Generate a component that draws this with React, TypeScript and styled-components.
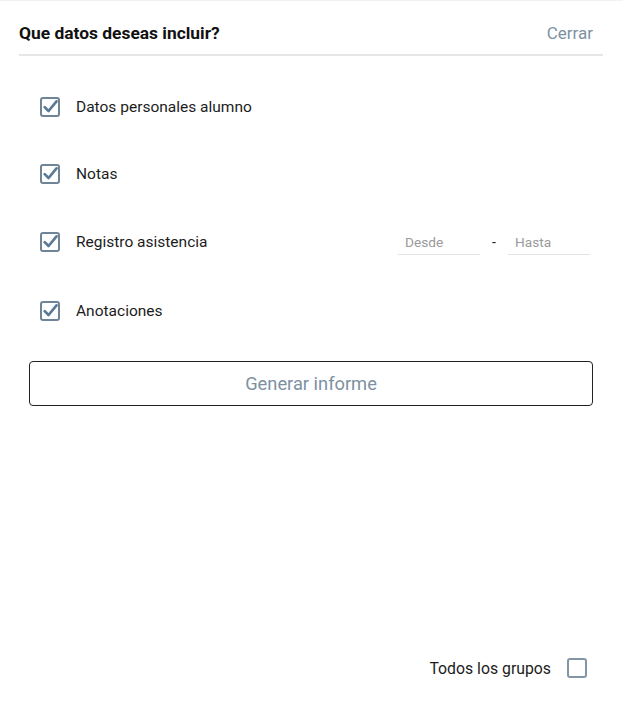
import * as React from 'react'
import styled, { createGlobalStyle } from 'styled-components'

const GlobalStyle = createGlobalStyle`
  html, body {
    margin: 0;
    padding: 0;
    background: #ffffff;
    font-family: Roboto, 'Noto Sans', sans-serif;
  }
`

const Page = styled.div`
  width: 623px;
  height: 704px;
  box-sizing: border-box;
  padding: 0 20px 0 19px;
  display: flex;
  flex-direction: column;
  border-top: 1px solid #f2f2f2;
`

const Header = styled.div`
  display: flex;
  align-items: center;
  justify-content: space-between;
  padding: 22px 0 11px;
  line-height: 20px;
  border-bottom: 2px solid #e6e6e6;
`

const Title = styled.h1`
  margin: 0;
  font-size: 17.4px;
  line-height: 20px;
  font-weight: 700;
  color: #111;
`

const CloseLink = styled.span`
  font-size: 17px;
  color: #7d91a2;
  margin-right: 10px;
  cursor: pointer;
`

const OptionList = styled.div`
  display: flex;
  flex-direction: column;
  padding: 17px 13px 0 21px;
`

const OptionRow = styled.div<{ $height: number }>`
  display: flex;
  align-items: center;
  height: ${p => p.$height}px;
`

const Box = styled.span<{ $checked?: boolean }>`
  width: 20px;
  height: 20px;
  box-sizing: border-box;
  border: 2px solid #6f8497;
  border-radius: 3px;
  display: inline-flex;
  align-items: center;
  justify-content: center;
  flex-shrink: 0;
  background: #fff;
  opacity: ${p => (p.$checked ? 1 : 0.85)};
`

const Label = styled.span`
  font-size: 15.5px;
  color: #1c1c1c;
  margin-left: 16px;
  flex-grow: 1;
`

const RangeGroup = styled.div`
  display: flex;
  align-items: center;
`

const DateField = styled.div`
  width: 82px;
  height: 26px;
  box-sizing: border-box;
  border-bottom: 1px solid #e4e4e4;
  padding: 5px 0 0 7px;
  margin-top: 1px;
  font-size: 13.7px;
  color: #9a9a9a;
`

const Dash = styled.span`
  width: 28px;
  text-align: center;
  font-size: 14px;
  color: #222;
`

const GenerateButton = styled.button`
  margin: 16px 10px 0 10px;
  height: 45px;
  border: 1px solid #222;
  border-radius: 4px;
  background: #fff;
  font-family: Roboto, 'Noto Sans', sans-serif;
  font-size: 18.3px;
  color: #7d91a2;
  cursor: pointer;
`

const Footer = styled.div`
  margin-top: auto;
  display: flex;
  align-items: center;
  justify-content: flex-end;
  padding: 0 16px 26px 0;
`

const FooterLabel = styled.span`
  font-size: 15.8px;
  color: #1c1c1c;
  margin-right: 16px;
`

const Check = () => (
  <svg width="15" height="15" viewBox="0 0 14 14">
    <path d="M1.6 7.6 L5.2 11.2 L12.6 2.2" fill="none" stroke="#5a7a95" strokeWidth="2.5" strokeLinecap="round" strokeLinejoin="round" />
  </svg>
)

const Checkbox: React.FC<{ checked?: boolean }> = ({ checked }) => (
  <Box $checked={checked}>{checked && <Check />}</Box>
)

const options = [
  { label: 'Datos personales alumno', height: 67 },
  { label: 'Notas', height: 67 },
  { label: 'Registro asistencia', height: 69, range: true },
  { label: 'Anotaciones', height: 69 }
]

export default function App() {
  return (
    <>
      <GlobalStyle />
      <Page>
        <Header>
          <Title>Que datos deseas incluir?</Title>
          <CloseLink>Cerrar</CloseLink>
        </Header>
        <OptionList>
          {options.map(o => (
            <OptionRow key={o.label} $height={o.height}>
              <Checkbox checked />
              <Label>{o.label}</Label>
              {o.range && (
                <RangeGroup>
                  <DateField>Desde</DateField>
                  <Dash>-</Dash>
                  <DateField>Hasta</DateField>
                </RangeGroup>
              )}
            </OptionRow>
          ))}
        </OptionList>
        <GenerateButton>Generar informe</GenerateButton>
        <Footer>
          <FooterLabel>Todos los grupos</FooterLabel>
          <Checkbox />
        </Footer>
      </Page>
    </>
  )
}
